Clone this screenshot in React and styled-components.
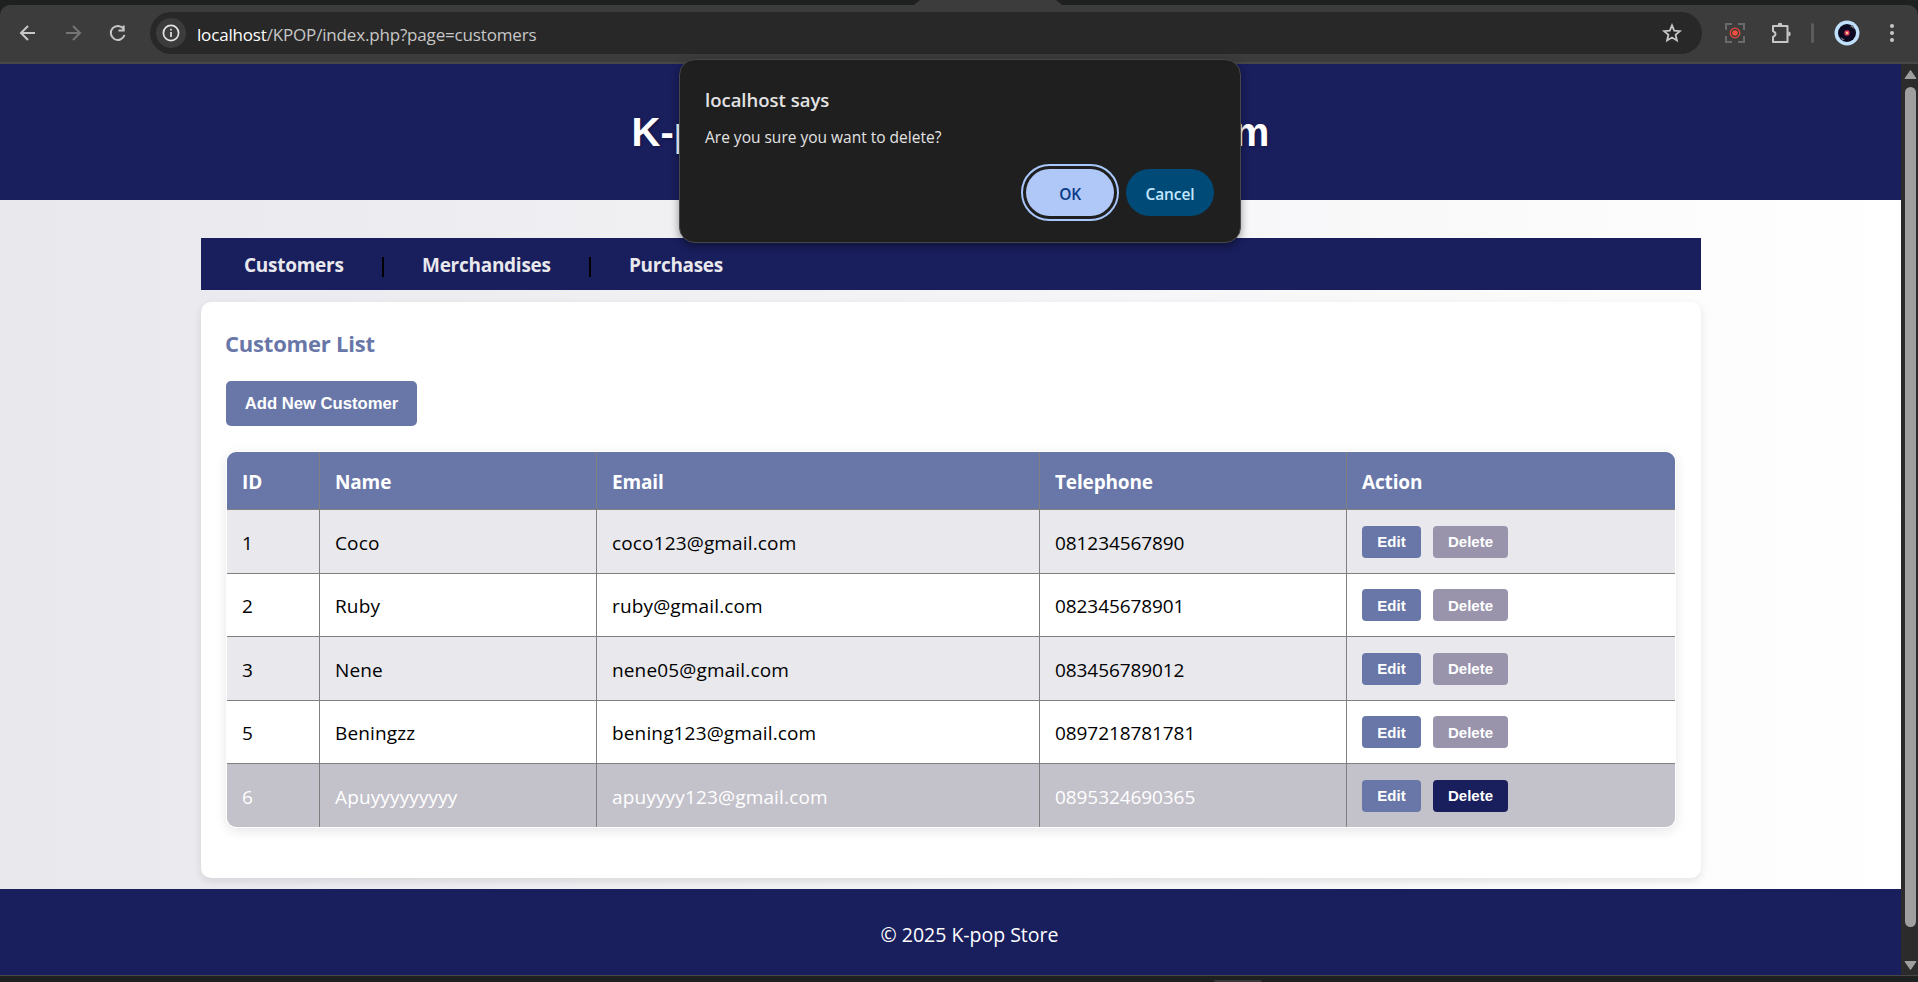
import React from 'react';
import styled, { createGlobalStyle } from 'styled-components';

const NAVY = '#191e5d';
const SLATE = '#6877a8';

const GlobalStyle = createGlobalStyle`
  * { box-sizing: border-box; }
  html, body, #root { margin: 0; padding: 0; height: 100%; overflow: hidden; }
  body { background: #1f2120; font-family: "Open Sans", "Noto Sans", sans-serif; color: #000; }
  h1, h2, p { margin: 0; }
  button { border: 0; padding: 0; font-family: inherit; }
`;

const Window = styled.div`
  width: 1918px;
  height: 982px;
  display: flex;
  flex-direction: column;
  padding: 5px 0 6px;
  background: #1f2120;
  position: relative;
`;

const Toolbar = styled.div`
  height: 59px;
  flex: none;
  display: flex;
  align-items: center;
  padding: 0 10px 2px 14px;
  background: #3c3c3c;
  border-bottom: 2px solid #474747;
  border-radius: 10px 10px 0 0;
  color: #c7c7c7;
  svg { display: block; flex: none; }
`;

const NavIcons = styled.div`
  display: flex;
  gap: 17px;
  width: 136px;
`;

const AddressBar = styled.div`
  width: 1552px;
  height: 42px;
  flex: none;
  border-radius: 21px;
  background: #282828;
  display: flex;
  align-items: center;
  padding: 0 20px 0 6px;
  margin-top: 1px;
`;

const InfoChip = styled.span`
  width: 30px;
  height: 30px;
  border-radius: 50%;
  background: #3c3c3c;
  display: grid;
  place-items: center;
  margin-right: 11px;
`;

const Url = styled.span`
  flex: 1;
  font-size: 17px;
  letter-spacing: -0.17px;
  padding-top: 2px;
  white-space: nowrap;
  b { font-weight: 400; color: #fff; }
`;

const ToolIcons = styled.div`
  display: flex;
  align-items: center;
  margin-left: 23px;
`;

const Divider = styled.i`
  width: 3px;
  height: 20px;
  border-radius: 2px;
  background: #5c5c5c;
  margin: 0 20px 0 19px;
`;

const Gap = styled.span`
  width: ${p => p.$size}px;
`;

const Viewport = styled.div`
  flex: 1;
  min-height: 0;
  display: flex;
`;

const Page = styled.div`
  width: 1901px;
  display: flex;
  flex-direction: column;
  background: linear-gradient(to right, #e8e8ed, #ffffff);
`;

const Header = styled.header`
  height: 136px;
  background: ${NAVY};
  color: #fff;
  display: grid;
  place-items: center;
  h1 {
    font: bold 40px/46px "Liberation Sans", sans-serif;
    white-space: nowrap;
    text-shadow: 1px 1px 3px rgba(0, 0, 0, 0.3);
  }
`;

const Main = styled.main`
  width: 1500px;
  height: 689px;
  margin-left: 201px;
  padding-top: 38px;
`;

const NavBar = styled.nav`
  height: 52px;
  background: ${NAVY};
  display: flex;
  align-items: center;
  padding-left: 43px;
`;

const NavLink = styled.a`
  font-size: 19px;
  font-weight: 700;
  line-height: 28px;
  padding-top: 2px;
  color: #e8e8ed;
  width: ${p => p.$width}px;
  letter-spacing: ${p => p.$spacing}px;
  white-space: nowrap;
`;

const NavSeparator = styled.i`
  width: 2px;
  height: 20px;
  background: #000;
  margin: 6px 38px 0 37px;
`;

const Card = styled.section`
  height: 576px;
  margin-top: 12px;
  padding: 24px 25px;
  background: #fff;
  border-radius: 10px;
  box-shadow: 0 3px 8px rgba(0, 0, 0, 0.1);
`;

const CardTitle = styled.h2`
  font-size: 22px;
  line-height: 34px;
  letter-spacing: -0.2px;
  margin-left: -1px;
  color: ${SLATE};
`;

const AddButton = styled.button`
  display: block;
  width: 191px;
  height: 45px;
  margin: 21px 0 25px;
  border-radius: 5px;
  background: ${SLATE};
  color: #fff;
  font: bold 16.67px "Liberation Sans", sans-serif;
  white-space: nowrap;
`;

const Table = styled.div`
  width: 1450px;
  border: 1px solid #fff;
  border-radius: 10px;
  overflow: hidden;
  box-shadow: 0 3px 12px rgba(0, 0, 0, 0.1);
`;

const Row = styled.div`
  display: grid;
  grid-template-columns: 93px 277px 443px 307px 1fr;
  height: ${p => p.$height}px;
  background: ${p => p.$bg};
  color: ${p => p.$color || '#000'};
  border-top: ${p => (p.$head ? 'none' : '1px solid #808080')};
  font-size: 19px;
`;

const Cell = styled.div`
  display: flex;
  align-items: center;
  padding: ${p => (p.$head ? '2px' : '2px')} 15px 0;
  font-weight: ${p => (p.$head ? 700 : 400)};
  letter-spacing: ${p => p.$spacing || 0}px;
  white-space: nowrap;
  &:not(:last-child) { border-right: 1px solid #808080; }
`;

const ActionCell = styled(Cell)`
  padding-top: 0;
  gap: 12px;
`;

const RowButton = styled.button`
  width: ${p => p.$width}px;
  height: 32px;
  border-radius: 4px;
  background: ${p => p.$bg};
  color: #fff;
  font: bold 15px "Liberation Sans", sans-serif;
`;

const Footer = styled.footer`
  height: 86px;
  background: ${NAVY};
  color: #fff;
  display: grid;
  place-items: center;
  padding: 4px 0 0 38px;
  font-size: 19.5px;
  letter-spacing: -0.02px;
`;

const Scrollbar = styled.div`
  width: 17px;
  background: #2b2b2b;
  display: flex;
  flex-direction: column;
  align-items: center;
  padding: 5px 0 4px 2px;
  svg { display: block; flex: none; }
`;

const Thumb = styled.div`
  width: 11px;
  height: 841px;
  margin: 7px 0 33px;
  border-radius: 6px;
  background: #9f9f9f;
`;

const WindowEdge = styled.div`
  height: 1px;
  flex: none;
  background: #474747;
`;

const TaskbarHint = styled.div`
  position: absolute;
  left: 1214px;
  top: 980px;
  width: 48px;
  height: 2px;
  border-radius: 2px 2px 0 0;
  background: #3a3a3a;
`;

const TabHint = styled.div`
  position: absolute;
  left: 914px;
  top: 0;
  width: 148px;
  height: 5px;
  background: #3c3c3c;
  clip-path: polygon(4% 0, 96% 0, 100% 100%, 0 100%);
`;

const Dialog = styled.div`
  position: absolute;
  left: 679px;
  top: 59px;
  width: 562px;
  height: 184px;
  padding: 25px 26px 0 25px;
  border: 1px solid #47484a;
  border-radius: 16px;
  background: #1f1f1f;
  color: #e3e3e3;
  box-shadow: 0 3px 8px rgba(0, 0, 0, 0.4);
  h2 { font-size: 18.5px; line-height: 30px; font-weight: 650; letter-spacing: 0; }
  p { font-size: 15.5px; line-height: 24px; margin-top: 10px; letter-spacing: 0; }
`;

const DialogActions = styled.div`
  display: flex;
  justify-content: flex-end;
  gap: 12px;
  margin-top: 20px;
`;

const DialogButton = styled.button`
  width: 88px;
  height: 47px;
  border-radius: 24px;
  font-size: 15.5px;
  font-weight: ${p => (p.$primary ? 600 : 650)};
  letter-spacing: ${p => (p.$primary ? -0.2 : -0.1)}px;
  padding-top: 2px;
  background: ${p => (p.$primary ? '#afc8f7' : '#004a77')};
  color: ${p => (p.$primary ? '#0b3a86' : '#c2e7ff')};
  ${p => p.$primary && 'outline: 2px solid #a8c7fa; outline-offset: 3px;'}
`;

const customers = [
  ['1', 'Coco', 'coco123@gmail.com', '081234567890'],
  ['2', 'Ruby', 'ruby@gmail.com', '082345678901'],
  ['3', 'Nene', 'nene05@gmail.com', '083456789012'],
  ['5', 'Beningzz', 'bening123@gmail.com', '0897218781781'],
  ['6', 'Apuyyyyyyyyy', 'apuyyyy123@gmail.com', '0895324690365'],
];
const rowHeights = [64, 63, 64, 63, 64];
const columnSpacing = [0, 0.13, 0.15, -0.08];

const Arrow = ({ flip, color = 'currentColor' }) => (
  <svg width="28" height="28" viewBox="0 0 28 28" fill="none" stroke={color} strokeWidth="2"
    transform={flip ? 'scale(-1 1)' : undefined}>
    <path d="M21 14H7.5M14 7l-7 7 7 7" />
  </svg>
);

const Reload = () => (
  <svg width="28" height="28" viewBox="0 0 28 28" fill="none" stroke="currentColor" strokeWidth="2">
    <path d="M19.6 10A7 7 0 1 0 20.5 16M19.7 6.5v5h-5.2" />
  </svg>
);

const Info = () => (
  <svg width="18" height="18" viewBox="0 0 18 18" fill="none" stroke="#e3e3e3" strokeWidth="1.7">
    <circle cx="9" cy="9" r="7.6" />
    <path d="M9 8v5M9 4.8v1.8" />
  </svg>
);

const Star = () => (
  <svg width="20" height="20" viewBox="0 0 20 20" fill="none" stroke="currentColor" strokeWidth="1.8">
    <path d="M10 2.3l2.2 5.3 5.7.5-4.3 3.7 1.3 5.6L10 14.5l-4.9 2.9 1.3-5.6-4.3-3.7 5.7-.5z" />
  </svg>
);

const Capture = () => (
  <svg width="20" height="20" viewBox="0 0 20 20" fill="none">
    <path d="M1 7V1h6M13 1h6v6M19 13v6h-6M7 19H1v-6" stroke="#6a6a6a" strokeWidth="2" />
    <circle cx="10" cy="10" r="4.8" stroke="#e8483c" strokeWidth="1.3" />
    <circle cx="10" cy="10" r="2.8" fill="#f0503f" />
  </svg>
);

const Puzzle = () => (
  <svg width="22" height="22" viewBox="0 0 22 22" fill="none" stroke="currentColor" strokeWidth="2">
    <path d="M3 4h14.5v16H3v-5l1.8-1.4a2.2 2.2 0 0 0 0-3.2L3 9z" strokeLinejoin="round" />
    <path d="M7.6 3.2a2.4 2.4 0 0 1 4.8 0zM18.3 9.6a2.4 2.4 0 0 1 0 4.8z" fill="currentColor" stroke="none" />
  </svg>
);

const Avatar = () => (
  <svg width="26" height="26" viewBox="0 0 26 26">
    <circle cx="13" cy="13" r="12.5" fill="#bfdffb" />
    <circle cx="13" cy="13" r="9" fill="#0b0820" />
    <path d="M16 6l3-1 1 4zM6.5 17l1.5 3 3 0z" fill="#77777f" />
    <circle cx="13" cy="13" r="3.2" fill="#5a1348" />
    <circle cx="13" cy="13" r="2.4" fill="#f4455c" />
    <circle cx="13" cy="13" r="1.1" fill="#ffe58a" />
  </svg>
);

const Dots = () => (
  <svg width="6" height="20" viewBox="0 0 6 20" fill="currentColor">
    <circle cx="3" cy="3" r="2" /><circle cx="3" cy="10" r="2" /><circle cx="3" cy="17" r="2" />
  </svg>
);

const Triangle = ({ down }) => (
  <svg width="13" height="11" viewBox="0 0 13 11" fill="#9f9f9f" stroke="#9f9f9f" strokeLinejoin="round">
    <path d={down ? 'M1 1.5h11L6.5 9.5z' : 'M1 9.5h11L6.5 1.5z'} />
  </svg>
);

export default function App() {
  return (
    <>
      <GlobalStyle />
      <Window>
        <TabHint />
        <Toolbar>
          <NavIcons>
            <Arrow />
            <Arrow flip color="#757575" />
            <Reload />
          </NavIcons>
          <AddressBar>
            <InfoChip><Info /></InfoChip>
            <Url><b>localhost</b>/KPOP/index.php?page=customers</Url>
            <Star />
          </AddressBar>
          <ToolIcons>
            <Capture />
            <Gap $size={25} />
            <Puzzle />
            <Divider />
            <Avatar />
            <Gap $size={29} />
            <Dots />
          </ToolIcons>
        </Toolbar>
        <Viewport>
          <Page>
            <Header><h1>K-pop Store Management System</h1></Header>
            <Main>
              <NavBar>
                <NavLink $width={101} $spacing={-0.27}>Customers</NavLink>
                <NavSeparator />
                <NavLink $width={130} $spacing={-0.27}>Merchandises</NavLink>
                <NavSeparator />
                <NavLink $width={94} $spacing={-0.35}>Purchases</NavLink>
              </NavBar>
              <Card>
                <CardTitle>Customer List</CardTitle>
                <AddButton>Add New Customer</AddButton>
                <Table>
                  <Row $head $height={57} $bg={SLATE} $color="#fff">
                    {['ID', 'Name', 'Email', 'Telephone', 'Action'].map(h => (
                      <Cell key={h} $head $spacing={-0.15}>{h}</Cell>
                    ))}
                  </Row>
                  {customers.map((c, i) => {
                    const hovered = i === 4;
                    return (
                      <Row key={c[0]} $height={rowHeights[i]}
                        $bg={hovered ? '#c3c1ca' : i % 2 ? '#fff' : '#e8e8ed'}
                        $color={hovered ? '#fff' : '#000'}>
                        {c.map((v, k) => <Cell key={k} $spacing={columnSpacing[k]}>{v}</Cell>)}
                        <ActionCell>
                          <RowButton $width={59} $bg={SLATE}>Edit</RowButton>
                          <RowButton $width={75} $bg={hovered ? NAVY : '#9994ac'}>Delete</RowButton>
                        </ActionCell>
                      </Row>
                    );
                  })}
                </Table>
              </Card>
            </Main>
            <Footer>© 2025 K-pop Store</Footer>
          </Page>
          <Scrollbar>
            <Triangle />
            <Thumb />
            <Triangle down />
          </Scrollbar>
        </Viewport>
        <WindowEdge />
        <TaskbarHint />
        <Dialog role="dialog">
          <h2>localhost says</h2>
          <p>Are you sure you want to delete?</p>
          <DialogActions>
            <DialogButton $primary>OK</DialogButton>
            <DialogButton>Cancel</DialogButton>
          </DialogActions>
        </Dialog>
      </Window>
    </>
  );
}
